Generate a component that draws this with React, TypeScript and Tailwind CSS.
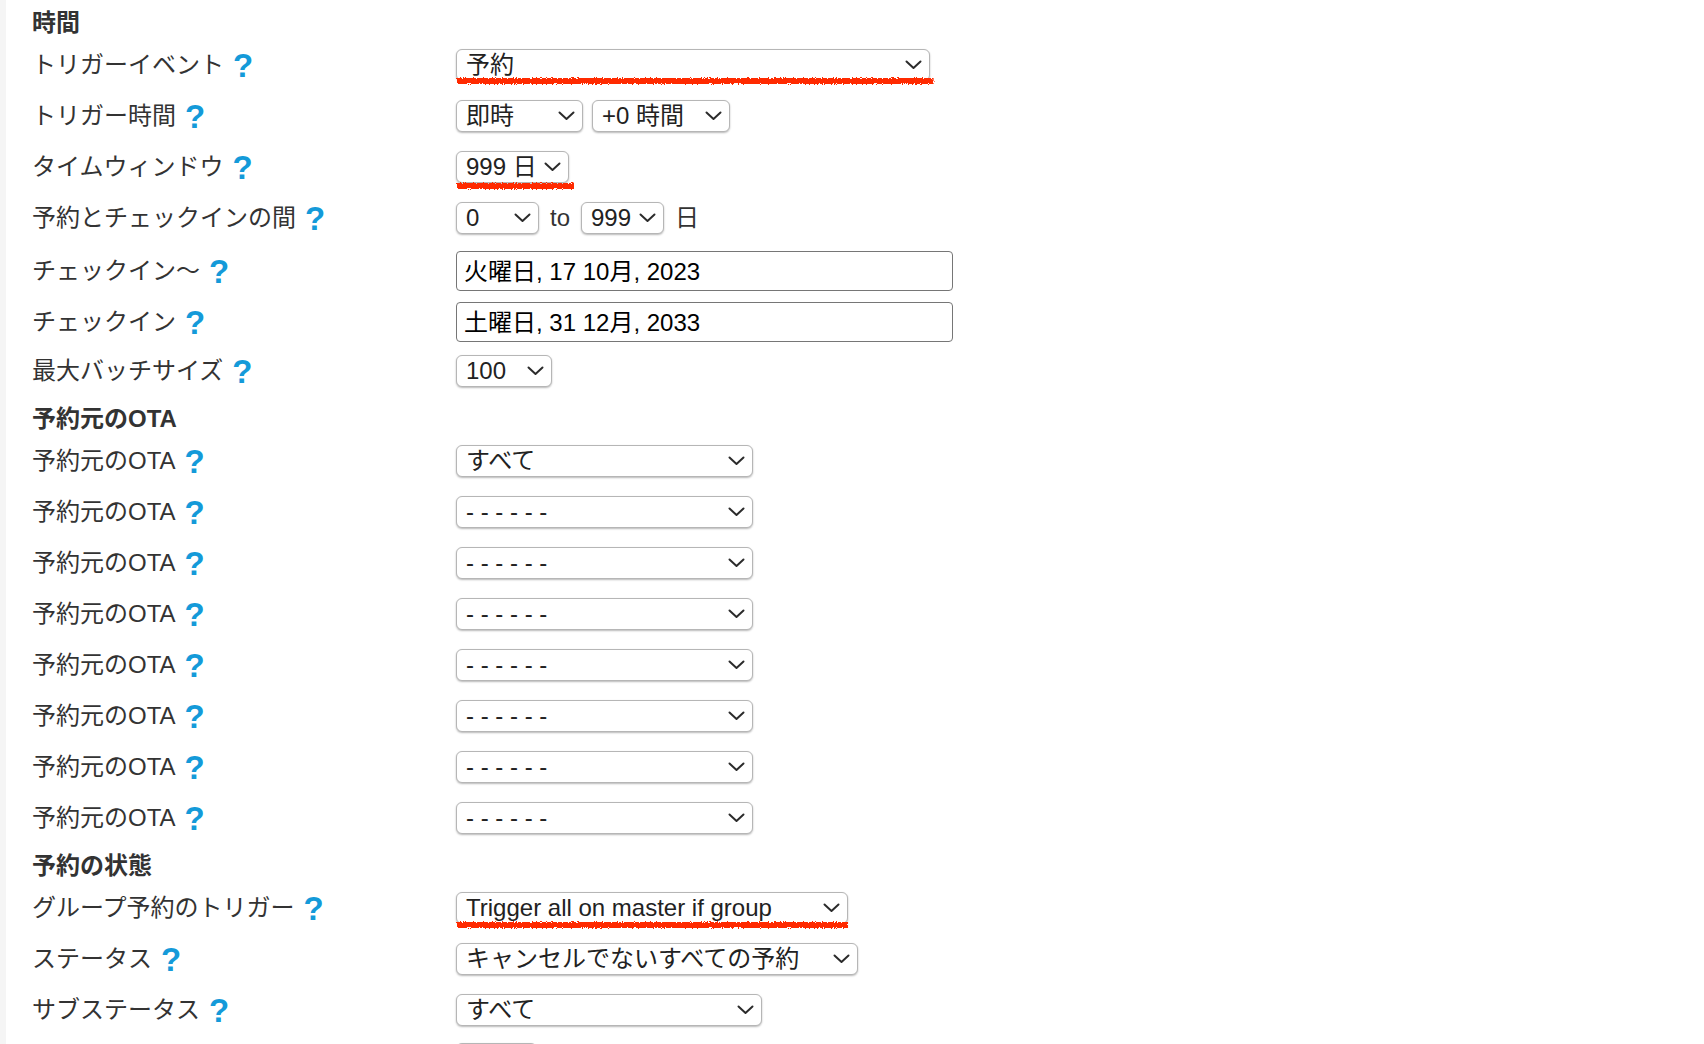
import React from 'react';

const font = "font-['Liberation_Sans','Noto_Sans_CJK_JP',sans-serif]";

function Help() {
  return (
    <span className="ml-[9px] inline-block text-[33px] font-bold leading-none text-[#149ad9]">?</span>
  );
}

function Chevron() {
  return (
    <svg width="17" height="10" viewBox="0 0 17 10" className="shrink-0">
      <polyline points="1.5,1.5 8.5,8 15.5,1.5" fill="none" stroke="#2b2b2b" strokeWidth="2" strokeLinecap="round" strokeLinejoin="round" />
    </svg>
  );
}

function Scribble({ id, className }: { id: string; className: string }) {
  return (
    <svg className={`pointer-events-none absolute h-[10px] ${className}`}>
      <defs>
        <filter id={id} x="-2%" y="-60%" width="104%" height="220%">
          <feTurbulence type="fractalNoise" baseFrequency="0.8" numOctaves="2" seed="3" result="n" />
          <feDisplacementMap in="SourceGraphic" in2="n" scale="3.5" />
        </filter>
      </defs>
      <rect x="1" y="2" width="99.5%" height="6" fill="#ff2a06" filter={`url(#${id})`} />
    </svg>
  );
}

function Select({ value, className, children }: { value: string; className: string; children?: React.ReactNode }) {
  return (
    <div className={`relative ${className}`}>
      <div className="flex h-[32px] w-full items-center justify-between rounded-[6px] border border-[#b6b6b6] bg-white pl-[9px] pr-[7px] text-[24px] leading-none text-[#222] shadow-[0_1px_2px_rgba(0,0,0,0.28)]">
        <span className="whitespace-pre">{value}</span>
        <Chevron />
      </div>
      {children}
    </div>
  );
}

function DateInput({ value }: { value: string }) {
  return (
    <input
      readOnly
      value={value}
      className={`h-[40px] w-[497px] rounded-[4px] border border-[#767676] bg-white pb-[3px] pl-[7px] text-[24px] text-black outline-none ${font}`}
    />
  );
}

function Row({ label, children }: { label: string; children: React.ReactNode }) {
  return (
    <div className="flex h-[51px] items-start">
      <div className="flex items-center">
        <div className="flex w-[424px] items-center text-[24px] text-[#333]">
          {label && (
            <>
              <span>{label}</span>
              <Help />
            </>
          )}
        </div>
        {children}
      </div>
    </div>
  );
}

function Heading({ text }: { text: string }) {
  return <div className="h-[39px] text-[24px] font-bold leading-[30px] text-[#333]">{text}</div>;
}

const dash = '- - - - - -';

export default function App() {
  return (
    <div className={`flex min-h-[1044px] bg-white ${font}`}>
      <div className="w-[6px] shrink-0 bg-[#f5f5f5]"></div>
      <div className="pl-[26px] pt-2">
        <Heading text="時間" />
        <Row label="トリガーイベント">
          <Select value="予約" className="w-[474px]">
            <Scribble id="s1" className="left-0 top-[27px] w-[479px]" />
          </Select>
        </Row>
        <Row label="トリガー時間">
          <div className="flex gap-[9px]">
            <Select value="即時" className="w-[127px]" />
            <Select value="+0 時間" className="w-[138px]" />
          </div>
        </Row>
        <Row label="タイムウィンドウ">
          <Select value="999 日" className="w-[113px]">
            <Scribble id="s2" className="left-0 top-[30px] w-[118px]" />
          </Select>
        </Row>
        <Row label="予約とチェックインの間">
          <div className="flex items-center gap-[11px] text-[24px] text-[#333]">
            <Select value="0" className="w-[83px]" />
            <span>to</span>
            <Select value="999" className="w-[83px]" />
            <span>日</span>
          </div>
        </Row>
        <Row label="チェックイン〜">
          <DateInput value="火曜日, 17 10月, 2023" />
        </Row>
        <Row label="チェックイン">
          <DateInput value="土曜日, 31 12月, 2033" />
        </Row>
        <Row label="最大バッチサイズ">
          <Select value="100" className="w-[96px]" />
        </Row>

        <Heading text="予約元のOTA" />
        <Row label="予約元のOTA">
          <Select value="すべて" className="w-[297px]" />
        </Row>
        {[1, 2, 3, 4, 5, 6, 7].map((i) => (
          <Row key={i} label="予約元のOTA">
            <Select value={dash} className="w-[297px]" />
          </Row>
        ))}

        <Heading text="予約の状態" />
        <Row label="グループ予約のトリガー">
          <Select value="Trigger all on master if group" className="w-[392px]">
            <Scribble id="s3" className="left-0 top-[28px] w-[393px]" />
          </Select>
        </Row>
        <Row label="ステータス">
          <Select value="キャンセルでないすべての予約" className="w-[402px]" />
        </Row>
        <Row label="サブステータス">
          <Select value="すべて" className="w-[306px]" />
        </Row>
        <Row label="">
          <Select value="" className="w-[81px]" />
        </Row>
      </div>
    </div>
  );
}
